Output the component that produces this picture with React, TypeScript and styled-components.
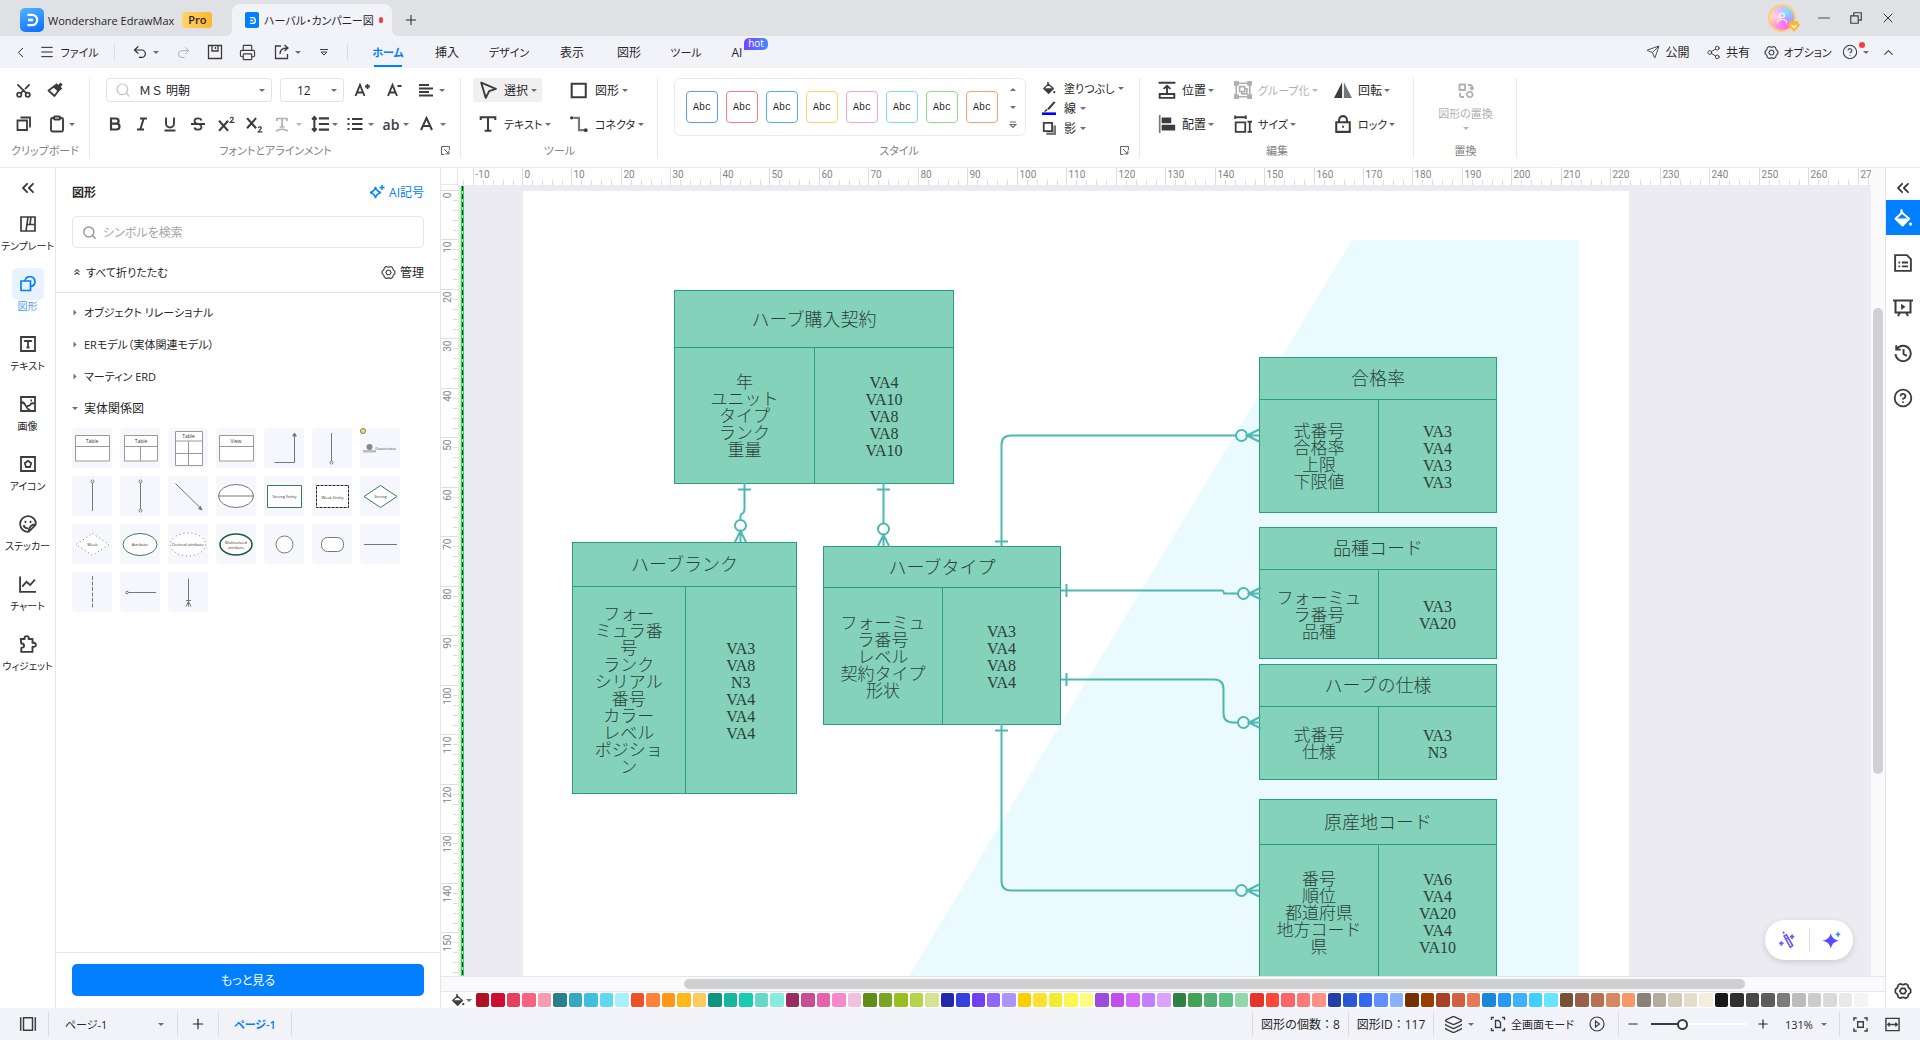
import React from 'react';
import styled, { createGlobalStyle, css } from 'styled-components';
import {
  ChevronLeft, ChevronUp, Menu, Undo2, Redo2, Printer, Plus, Minus, X, Send, Share2,
  Search, Scissors, Clipboard, ChevronsLeft, ChevronsUp, CircleHelp, Layers,
} from 'lucide-react';

const ink = '#3c3c3c';
const blue = '#0080ff';
const line = '#e6e6ea';
const teal = '#4db8b2';

const Global = createGlobalStyle`
  * { box-sizing: border-box; }
  html, body { margin: 0; height: 100%; }
  body, button, input, select {
    font-family: "Open Sans", "Noto Sans CJK JP", sans-serif;
    font-size: 12px;
    color: #262626;
    font-feature-settings: "palt";
  }
  button { background: none; border: 0; padding: 0; margin: 0; cursor: pointer; white-space: nowrap; }
  svg { display: block; flex: none; }
`;

const Shell = styled.div`
  height: 100vh;
  display: flex;
  flex-direction: column;
  overflow: hidden;
  background: #fff;
`;

/* ---------- shared bits ---------- */

const Caret = styled.i<{ $light?: boolean }>`
  flex: none;
  width: 0;
  height: 0;
  border: 3px solid transparent;
  border-top-color: ${p => (p.$light ? '#b8b8b8' : '#6e6e6e')};
  border-bottom: 0;
`;

const Spacer = styled.div`flex: 1;`;

const Gap = styled.div<{ $w: number }>`
  flex: none;
  width: ${p => p.$w}px;
`;

const Rule = styled.div<{ $h?: number }>`
  flex: none;
  width: 1px;
  height: ${p => p.$h ?? 16}px;
  background: #dcdde2;
`;

const Small = styled.span`font-size: 11px;`;

const Slot = styled.button<{ $w: number; $h?: number; $gap?: number }>`
  flex: none;
  width: ${p => p.$w}px;
  height: ${p => p.$h ?? 24}px;
  display: flex;
  align-items: center;
  justify-content: center;
  gap: ${p => p.$gap ?? 5}px;
  color: #262626;
`;

type IconProps = { s?: number; w?: number; box?: number; c?: string; children: React.ReactNode };
const Icon = ({ s = 16, w = 1.5, box = 16, c = ink, children }: IconProps) => (
  <svg width={s} height={s} viewBox={`0 0 ${box} ${box}`} fill="none" stroke={c} strokeWidth={w} aria-hidden="true">
    {children}
  </svg>
);

const G = ({ d, w = 1.8, c, s }: { d: string; w?: number; c?: string; s?: number }) => (
  <Icon w={w} c={c} s={s}><path d={d} /></Icon>
);

const Gear = ({ s = 16, w = 1.2 }: { s?: number; w?: number }) => (
  <Icon s={s} w={w}>
    <path d="M5.6 1.6 Q8 3 10.4 1.6 L12.4 2.8 Q12.4 5.4 14.8 6.6 V9.4 Q12.4 10.6 12.4 13.2 L10.4 14.4 Q8 13 5.6 14.4 L3.6 13.2 Q3.6 10.6 1.2 9.4 V6.6 Q3.6 5.4 3.6 2.8 Z" strokeLinejoin="round" />
    <path d="M6.6 5.6h2.8L10.8 8 9.4 10.4H6.6L5.2 8Z" strokeLinejoin="round" />
  </Icon>
);

const Bucket = ({ c = ink, s = 16 }: { c?: string; s?: number }) => (
  <Icon s={s} w={1.5} c={c}>
    <path d="M7 1 L6.5 3.2 L13 8.6 L7.6 14 L2 8.6 L8 3" strokeLinejoin="round" />
    <path d="M2 8.4 H13 L7.6 14 Z" fill={c} stroke="none" />
    <circle cx="14" cy="12.8" r="1.3" fill={c} stroke="none" />
  </Icon>
);

/* ---------- title bar ---------- */

const TitleBar = styled.header`
  flex: none;
  height: 36px;
  display: flex;
  align-items: center;
  padding: 0 16px 0 20px;
  background: #e0e1e5;
`;
const Brand = styled.div`
  align-self: flex-end;
  width: 212px;
  height: 32px;
  display: flex;
  align-items: center;
  gap: 4px;
  font-size: 11px;
  white-space: nowrap;
`;
const Logo = styled.span<{ $small?: boolean }>`
  flex: none;
  width: ${p => (p.$small ? 14 : 24)}px;
  height: ${p => (p.$small ? 16 : 24)}px;
  border-radius: ${p => (p.$small ? 2 : 5)}px;
  background: ${p => (p.$small ? blue : 'linear-gradient(160deg,#52b4ff,#0a6cff)')};
  display: grid;
  place-items: center;
`;
const Pro = styled.span`
  margin-left: 4px;
  width: 30px;
  height: 16px;
  line-height: 16px;
  border-radius: 3px;
  text-align: center;
  font-weight: 600;
  background: linear-gradient(90deg, #ffd56b, #ffb62e);
`;
const Tab = styled.div`
  align-self: flex-end;
  position: relative;
  width: 160px;
  height: 32px;
  padding: 0 9px 0 13px;
  display: flex;
  align-items: center;
  gap: 5px;
  border-radius: 8px 8px 0 0;
  background: #f2f3f9;
  white-space: nowrap;
  &::before, &::after {
    content: "";
    position: absolute;
    bottom: 0;
    width: 6px;
    height: 6px;
  }
  &::before { left: -6px; background: radial-gradient(circle at 0 0, transparent 6px, #f2f3f9 6px); }
  &::after { right: -6px; background: radial-gradient(circle at 100% 0, transparent 6px, #f2f3f9 6px); }
`;
const NewTab = styled(Slot)`align-self: flex-end;`;
const RedDot = styled.i`
  margin-left: auto;
  width: 6px;
  height: 6px;
  border-radius: 50%;
  background: #ff3b3b;
`;
const Avatar = styled.button`
  position: relative;
  width: 28px;
  height: 28px;
  margin-right: 12px;
  border: 2px solid #ffcf70;
  border-radius: 50%;
  display: grid;
  place-items: center;
  background: conic-gradient(from 40deg, #7ddfff, #b99cff, #ff6bf0, #ff9ae0, #ffd9c9, #e8b9ff, #7ddfff);
`;
const Gem = styled.span`
  position: absolute;
  right: -6px;
  bottom: -2px;
`;

const DMark = ({ s }: { s: number }) => (
  <svg width={s} height={s} viewBox="0 0 14 14" fill="none" stroke="#fff" strokeWidth="2">
    <path d="M3 2.5h4a4.5 4.5 0 0 1 0 9H3M3.5 7H8" />
  </svg>
);

const TitleArea = () => (
  <TitleBar>
    <Brand>
      <Logo><DMark s={16} /></Logo>
      <span>Wondershare EdrawMax</span>
      <Pro>Pro</Pro>
    </Brand>
    <Tab>
      <Logo $small><DMark s={9} /></Logo>
      <Small>ハーバル・カンパニー図</Small>
      <RedDot />
    </Tab>
    <NewTab $w={38} $h={32} aria-label="新しいタブ"><Plus size={16} strokeWidth={1.5} /></NewTab>
    <Spacer />
    <Avatar aria-label="アカウント">
      <Icon s={14} w={1.2} c="#fff"><circle cx="8" cy="5" r="2.8" /><path d="M3 14v-1.5a2.5 2.5 0 0 1 2.5-2.5h5a2.5 2.5 0 0 1 2.5 2.5V14" /></Icon>
      <Gem>
        <svg width="12" height="11" viewBox="0 0 12 11"><path d="M3 0h6l3 4-6 7-6-7Z" fill="#ffb52b" /><path d="M3.5 4 6 6.5 8.5 4" fill="none" stroke="#fff" strokeWidth="1.3" /></svg>
      </Gem>
    </Avatar>
    <Slot $w={32} aria-label="最小化"><Icon s={12} w={1.2}><path d="M0 8h16" /></Icon></Slot>
    <Slot $w={32} aria-label="元に戻す"><Icon s={14} w={1.3}><path d="M2 5.5h8.5V14H2zM5.5 5V2H14v8.5h-3" /></Icon></Slot>
    <Slot $w={32} aria-label="閉じる"><X size={16} strokeWidth={1.4} /></Slot>
  </TitleBar>
);

/* ---------- menu bar ---------- */

const MenuBar = styled.nav`
  flex: none;
  height: 32px;
  display: flex;
  align-items: center;
  padding: 0 16px 0 4px;
  background: #f2f3f9;
`;
const MenuTab = styled.button<{ $w: number; $on?: boolean; $kana?: boolean }>`
  position: relative;
  width: ${p => p.$w}px;
  height: 32px;
  color: ${p => (p.$on ? blue : '#262626')};
  font-size: ${p => (p.$kana ? 11 : 12)}px;
  ${p => p.$on && css`
    font-weight: 600;
    &::after {
      content: "";
      position: absolute;
      left: 16px;
      right: 16px;
      bottom: 1px;
      height: 2px;
      background: ${blue};
    }
  `}
`;
const Hot = styled.span`
  position: absolute;
  left: 28px;
  top: 2px;
  width: 24px;
  height: 12px;
  line-height: 11px;
  border-radius: 5px 5px 5px 0;
  background: linear-gradient(90deg, #7a45ff, #3f8bff);
  color: #fff;
  font-size: 10px;
`;
const HelpSlot = styled(Slot)`position: relative;`;
const HelpDot = styled.i`
  position: absolute;
  right: 7px;
  top: 2px;
  width: 6px;
  height: 6px;
  border-radius: 50%;
  background: #ff3b3b;
`;

const MenuArea = () => (
  <MenuBar>
    <Slot $w={32} aria-label="戻る"><ChevronLeft size={17} strokeWidth={1.4} /></Slot>
    <Slot $w={66}><Menu size={16} strokeWidth={1.5} /><Small>ファイル</Small></Slot>
    <Gap $w={12} /><Rule />
    <Slot $w={60} aria-label="元に戻す"><Undo2 size={16} strokeWidth={1.7} /><Caret /></Slot>
    <Slot $w={16} aria-label="やり直し"><Redo2 size={15} strokeWidth={1.5} color="#aaa" /></Slot>
    <Gap $w={8} />
    <Slot $w={32} aria-label="保存"><Icon w={1.3}><path d="M1.5 1.5h13v13h-13zM5 1.5v5.5h6V1.5M8.5 3v2" /></Icon></Slot>
    <Slot $w={32} aria-label="印刷"><Printer size={17} strokeWidth={1.6} color={ink} /></Slot>
    <Slot $w={48} aria-label="書き出し">
      <Icon w={1.3}><path d="M7 2H1.5v12.5h12V10M6 10q0-6 7-6M10.5 1 14 4l-3.5 3" /></Icon><Caret />
    </Slot>
    <Slot $w={26} aria-label="その他"><Icon s={8} box={8} w={1}><path d="M0 1.5h8M1 4h6L4 7Z" /></Icon></Slot>
    <Gap $w={10} /><Rule />
    <Gap $w={10} />
    <MenuTab $w={60} $on $kana>ホーム</MenuTab>
    <MenuTab $w={58}>挿入</MenuTab>
    <MenuTab $w={66} $kana>デザイン</MenuTab>
    <MenuTab $w={60}>表示</MenuTab>
    <MenuTab $w={54}>図形</MenuTab>
    <MenuTab $w={60} $kana>ツール</MenuTab>
    <MenuTab $w={42}>AI<Hot>hot</Hot></MenuTab>
    <Spacer />
    <Slot $w={60}><Send size={14} strokeWidth={1.5} color={ink} />公開</Slot>
    <Slot $w={60}><Share2 size={15} strokeWidth={1.5} color={ink} />共有</Slot>
    <Gap $w={4} />
    <Slot $w={72} $gap={4}><Gear s={15} /><Small>オプション</Small></Slot>
    <Gap $w={4} />
    <HelpSlot $w={34} aria-label="ヘルプ"><CircleHelp size={16} strokeWidth={1.6} color={ink} /><Caret /><HelpDot /></HelpSlot>
    <Slot $w={32} aria-label="リボンを隠す"><ChevronUp size={15} strokeWidth={1.7} color={ink} /></Slot>
  </MenuBar>
);

/* ---------- ribbon ---------- */

const Ribbon = styled.div`
  flex: none;
  height: 100px;
  display: flex;
  align-items: stretch;
  border-bottom: 1px solid #ebebee;
  background: #fff;
`;
const Group = styled.section<{ $w: number }>`
  flex: none;
  position: relative;
  width: ${p => p.$w}px;
  padding: 10px 12px 0;
  display: flex;
  flex-direction: column;
  gap: 10px;
  &::after {
    content: "";
    position: absolute;
    right: 0;
    top: 10px;
    height: 80px;
    width: 1px;
    background: #ebebee;
  }
`;
const GroupName = styled.footer`
  display: flex;
  justify-content: center;
  align-items: center;
  height: 8px;
  font-size: 11px;
  color: #828282;
  white-space: nowrap;
`;
const Corner = styled.button`
  position: absolute;
  right: 11px;
  bottom: 12px;
`;
const Row = styled.div<{ $pad?: number }>`
  height: 24px;
  display: flex;
  align-items: center;
  padding-left: ${p => p.$pad ?? 0}px;
`;
const Tool = styled.button<{ $w: number; $on?: boolean; $off?: boolean; $gap?: number }>`
  flex: none;
  width: ${p => p.$w}px;
  height: 24px;
  padding-left: 6px;
  display: flex;
  align-items: center;
  gap: ${p => p.$gap ?? 3}px;
  border-radius: 3px;
  background: ${p => (p.$on ? '#f0f0f0' : 'transparent')};
  color: ${p => (p.$off ? '#b0b0b0' : '#262626')};
  svg { margin-right: 4px; }
`;
const Field = styled.label<{ $w: number }>`
  flex: none;
  width: ${p => p.$w}px;
  height: 24px;
  display: flex;
  align-items: center;
  gap: 8px;
  padding: 0 6px 0 8px;
  border: 1px solid #e2e2e6;
  border-radius: 4px;
  select {
    flex: 1;
    min-width: 0;
    appearance: none;
    border: 0;
    background: none;
    padding: 0;
    outline: 0;
    font-feature-settings: normal;
  }
`;
const StyleBox = styled.div`
  flex: none;
  width: 352px;
  height: 58px;
  display: flex;
  align-items: center;
  gap: 8px;
  padding: 0 5px 0 11px;
  border: 1px solid #ebebee;
  border-radius: 6px;
`;
const StyleTile = styled.button<{ $c: string }>`
  width: 32px;
  height: 32px;
  border: 1px solid ${p => p.$c};
  border-radius: 4px;
  font-family: "Liberation Mono", monospace;
  font-size: 10px;
`;
const Steps = styled.div`
  margin-left: auto;
  height: 48px;
  display: flex;
  flex-direction: column;
  justify-content: space-between;
  align-items: center;
  button { height: 12px; width: 14px; display: grid; place-items: center; }
`;
const StyleArea = styled.div`
  height: 58px;
  display: flex;
  gap: 10px;
  padding-left: 4px;
`;
const StyleCol = styled.div`
  display: flex;
  flex-direction: column;
  button { height: 20px; }
`;
const Replace = styled.button`
  height: 58px;
  display: flex;
  flex-direction: column;
  align-items: center;
  gap: 6px;
  padding-top: 5px;
  color: #b0b0b0;
  font-size: 11px;
`;
const UpCaret = styled(Caret)`transform: rotate(180deg);`;
const AbGlyph = styled.span`
  font-size: 14px;
  font-weight: 600;
  color: ${ink};
`;

const tileColors = ['#5b9bff', '#ff7a82', '#4fb0f5', '#ffd368', '#f5a3e0', '#80dcf2', '#90dd84', '#ff9f70'];

const CornerIcon = () => (
  <Corner aria-label="詳細設定">
    <Icon s={9} w={1.5}><path d="M6 15H1V1h14v6M5.5 5.5l8 8M14 8v6H8" /></Icon>
  </Corner>
);

const RibbonArea = () => (
  <Ribbon>
    <Group $w={90}>
      <Row>
        <Slot $w={23} aria-label="切り取り"><Scissors size={17} strokeWidth={2.5} color={ink} transform="rotate(-90)" /></Slot>
        <Gap $w={8} />
        <Slot $w={24} aria-label="書式のコピー">
          <Icon w={1.8}><path d="M1.5 8.5 7 4.5l4.5 4L7.5 14Z" strokeLinejoin="round" /><path d="M7 4.5 11.5 8.5 14 6.5 9.5 2.5Z" fill={ink} /><path d="M12 4.5 14.5 1.5" strokeWidth="3" /></Icon>
        </Slot>
      </Row>
      <Row>
        <Slot $w={23} aria-label="コピー"><G d="M1.5 4.5h9.5v9.5H1.5zM4.5 1.5h9.5v10" /></Slot>
        <Gap $w={8} />
        <Slot $w={36} $gap={3} aria-label="貼り付け"><Clipboard size={18} strokeWidth={2.5} color={ink} /><Caret /></Slot>
      </Row>
      <GroupName>クリップボード</GroupName>
    </Group>

    <Group $w={371}>
      <Row $pad={4}>
        <Field $w={166}>
          <Search size={16} strokeWidth={1.8} color="#c0c0c0" />
          <select aria-label="フォント"><option>ＭＳ 明朝</option></select>
          <Caret />
        </Field>
        <Gap $w={8} />
        <Field $w={64}>
          <Gap $w={0} />
          <select aria-label="サイズ"><option>12</option></select>
          <Caret />
        </Field>
        <Gap $w={3} />
        <Slot $w={30} aria-label="大きく"><G w={1.9} d="M1.5 14 6 3l4.5 11M3 10.5h6M11 4.5h5M13.5 2v5" /></Slot>
        <Slot $w={34} aria-label="小さく"><G w={1.9} d="M2 14 6.5 3 11 14M3.5 10.5h6M11.5 4h4" /></Slot>
        <Slot $w={40} aria-label="配置"><G w={2} d="M1 3h10M1 6.5h14M1 10h10M1 13.5h14" /><Caret /></Slot>
      </Row>
      <Row>
        <Slot $w={26} aria-label="太字"><G w={2.2} d="M4 2.5h5a2.6 2.6 0 0 1 0 5.2H4zM4 7.7h5.6a2.9 2.9 0 0 1 0 5.8H4z" /></Slot>
        <Slot $w={28} aria-label="斜体"><G w={2} d="M6 2.5h7M3 13.5h7M9.7 2.5 6.3 13.5" /></Slot>
        <Slot $w={28} aria-label="下線"><G w={1.9} d="M4 1.5v6a4 4 0 0 0 8 0v-6M2.5 14.5h11" /></Slot>
        <Slot $w={28} aria-label="取り消し線"><G d="M11.5 4.5C11 1.5 4.5 1.5 4.5 5q0 2 3 2.8M1 8h14M4.5 11.5c.5 3 7 3 7-.5q0-1.5-2-2.5" /></Slot>
        <Slot $w={28} aria-label="上付き"><Icon s={17} w={2}><path d="M1 4.5 9.5 14M9.5 4.5 1 14" /><path d="M11.5 2.5q.3-1.5 1.700-1.300 1.800.3.800 2L11.500 6h4" strokeWidth="1.1" /></Icon></Slot>
        <Slot $w={28} aria-label="下付き"><Icon s={17} w={2}><path d="M1 2 9.5 11.5M9.5 2 1 11.5" /><path d="M11.5 11.5q.3-1.5 1.700-1.300 1.800.3.800 2L11.500 15h4" strokeWidth="1.1" /></Icon></Slot>
        <Gap $w={2} />
        <Slot $w={36} aria-label="文字効果"><G c="#b0b0b0" w={1.7} d="M2 2.5h10M2 2v3M12 2v3M7 2.5v9M4.5 11h5M1 15q6-3.5 12 0" /><Caret $light /></Slot>
        <Slot $w={36} $gap={3} aria-label="行間"><Icon s={18} w={1.8}><path d="M3 2v12M1 4l2-2.2L5 4M1 12l2 2.2L5 12M7 3h9M7 8h9M7 13h9" /></Icon><Caret /></Slot>
        <Slot $w={36} aria-label="箇条書き"><G w={1.9} d="M5 3h10.5M5 8h10.5M5 13h10.5M.5 3h2M.5 8h2M.5 13h2" /><Caret /></Slot>
        <Slot $w={36} $gap={4} aria-label="大文字小文字"><AbGlyph>ab</AbGlyph><Caret /></Slot>
        <Slot $w={36} aria-label="文字色"><G w={2} d="M2 14 7.5 2 13 14M4 10h7" /><Caret /></Slot>
      </Row>
      <GroupName>フォントとアラインメント</GroupName>
      <CornerIcon />
    </Group>

    <Group $w={197}>
      <Row>
        <Tool $w={69} $on>
          <Icon s={18} w={1.7}><path d="M2 1.5 15 7 9 9 6 15Z" strokeLinejoin="round" /></Icon>選択<Caret />
        </Tool>
        <Gap $w={22} />
        <Tool $w={80}><G s={18} w={1.8} d="M1.5 2.5h12.5v12h-12.5z" />図形<Caret /></Tool>
      </Row>
      <Row>
        <Tool $w={84}><G s={18} w={1.8} d="M1.5 4.5V2h13v2.5M8 2v12.5M5 14h6" /><Small>テキスト</Small><Caret /></Tool>
        <Gap $w={7} />
        <Tool $w={84}>
          <Icon s={18} w={1.9} c="#777"><path d="M3 2.5h5v11h5" /><circle cx="1.5" cy="2.5" r="1.5" fill={ink} stroke="none" /><circle cx="14" cy="13.5" r="1.7" fill={ink} stroke="none" /></Icon>
          <Small>コネクタ</Small><Caret />
        </Tool>
      </Row>
      <GroupName>ツール</GroupName>
    </Group>

    <Group $w={482}>
      <StyleArea>
        <StyleBox>
          {tileColors.map(c => <StyleTile key={c} $c={c}>Abc</StyleTile>)}
          <Steps>
            <button aria-label="上へ"><UpCaret /></button>
            <button aria-label="下へ"><Caret /></button>
            <button aria-label="一覧"><Icon s={8} box={8} w={1.2} c="#6e6e6e"><path d="M1 1h6M1 3.5h6L4 6.5Z" /></Icon></button>
          </Steps>
        </StyleBox>
        <StyleCol>
          <Tool $w={84} $gap={4}><Bucket s={14} /><Small>塗りつぶし</Small><Caret /></Tool>
          <Tool $w={60} $gap={4}>
            <Icon s={14} box={16} w={1.8}><path d="M14.5 1 7 9.5" strokeWidth="2.4" /><path d="M6 9.5 3 12" /><path d="M0 14.5h16" stroke="#00f" strokeWidth="3" /></Icon>線<Caret />
          </Tool>
          <Tool $w={60} $gap={4}>
            <Icon s={14} w={2}><path d="M5 14.5h9.5V5" stroke="#777" strokeWidth="3" /><path d="M2 2h9.5v9.5H2z" fill="#fff" /></Icon>影<Caret />
          </Tool>
        </StyleCol>
      </StyleArea>
      <GroupName>スタイル</GroupName>
      <CornerIcon />
    </Group>

    <Group $w={274}>
      <Row>
        <Tool $w={76} $gap={2}><G s={18} w={1.7} d="M.5 1.5h15M8 11V4.5M5 7l3-2.8L11 7M1.5 11.5h13v3.500h-13z" />位置<Caret /></Tool>
        <Tool $w={100} $off $gap={2}><G s={18} c="#b0b0b0" w={1.5} d="M2 2h12v12H2zM.5 .5h3v3h-3zM12.5 .5h3v3h-3zM.5 12.5h3v3h-3zM12.5 12.5h3v3h-3zM5 5h4.5v4.5H5zM10 7h1.500v4.500H7V10" /><Small>グループ化</Small><Caret $light /></Tool>
        <Tool $w={70} $gap={2}>
          <Icon s={18}><path d="M7.2 1v14H0Z" fill={ink} stroke="none" /><path d="M8.8 1v14H16Z" fill="#777" stroke="none" /></Icon>回転<Caret />
        </Tool>
      </Row>
      <Row>
        <Tool $w={76} $gap={2}><Icon s={18}><path d="M1.5 0v16" stroke="#777" /><path d="M4 3h7v3.5H4zM4 9.5h10.5V13H4z" fill={ink} /></Icon>配置<Caret /></Tool>
        <Tool $w={100} $gap={2}><G s={18} w={1.6} d="M1.5 6.5h8.5V15H1.5zM1 2h9.5M1 .5v3M10.5 .5v3M12 6h4M12 15h4M14 6v9" /><Small>サイズ</Small><Caret /></Tool>
        <Tool $w={70} $gap={2}><G s={18} w={1.8} d="M2 6.5h12v8.500H2zM4.5 6V4.5a3.5 3.5 0 0 1 7 0V6M7.2 10.5h1.6" /><Small>ロック</Small><Caret /></Tool>
      </Row>
      <GroupName>編集</GroupName>
    </Group>

    <Group $w={103}>
      <Replace>
        <G c="#b0b0b0" w={1.8} d="M1.5 1.5h5.5V7H1.5zM9 11.5a2.8 2.8 0 1 0 5.6 0a2.8 2.8 0 1 0-5.6 0M10 2h2.5q1.5 0 1.5 1.5V6M12 4.5l2 2 2-2M2 10v2.5q0 1.5 1.5 1.5H6" />
        <span>図形の置換</span>
        <Caret $light />
      </Replace>
      <GroupName>置換</GroupName>
    </Group>
  </Ribbon>
);

/* ---------- left rail ---------- */

const Body = styled.main`
  flex: 1;
  min-height: 0;
  display: flex;
`;
const Rail = styled.nav`
  flex: none;
  width: 56px;
  display: flex;
  flex-direction: column;
  align-items: center;
  border-right: 1px solid ${line};
`;
const RailTop = styled.button`
  height: 40px;
  display: grid;
  place-items: center;
`;
const RailItem = styled.button<{ $on?: boolean }>`
  height: 60px;
  width: 55px;
  display: flex;
  flex-direction: column;
  align-items: center;
  color: ${p => (p.$on ? '#4c9fff' : '#262626')};
  font-size: 10px;
  line-height: 12px;
  span {
    width: 32px;
    height: 32px;
    border-radius: 5px;
    display: grid;
    place-items: center;
    background: ${p => (p.$on ? '#e8f3ff' : 'transparent')};
  }
`;

const railItems: { name: string; on?: boolean; icon: React.ReactNode }[] = [
  { name: 'テンプレート', icon: <G w={1.7} d="M1 1h14v14H1zM8 1 6 15M7.5 8.5H15M10 8.5 11 1" /> },
  { name: '図形', on: true, icon: <G c={blue} w={1.7} d="M1 5h9.5v9.5H1zM5 4.5a5 5 0 1 1 6 6" /> },
  { name: 'テキスト', icon: <G w={1.8} d="M1 1h14v14H1zM5 6V5h6v1M8 5v6.5M6.5 11.5h3" /> },
  { name: '画像', icon: <G w={1.8} d="M1 1h14v14H1zM1 6q3 0 4.5 3.5T11 15M7 10q3 0 3.5-1.5T15 7M10.5 4.5h1.5" /> },
  { name: 'アイコン', icon: <G w={1.8} d="M1 1h14v14H1zM8 4.8l3.2 2.4L10 11H6L4.8 7.2Z" /> },
  { name: 'ステッカー', icon: <Icon s={18} w={1.6}><path d="M15 8.5A7 7 0 1 0 8.5 15M15 8.5 8.5 15M15 8.5q-6-.5-6.5 6.5M4 9q1 3 4 2.8" /><path d="M5 6h1.5M9.5 6H11" strokeWidth="2" /></Icon> },
  { name: 'チャート', icon: <Icon s={17} w={1.7}><path d="M1 .5V15h15M3 10l4-4.5 3.5 3L15 3.5" /></Icon> },
  { name: 'ウィジェット', icon: <Icon s={18} w={1.7}><path d="M1.5 3.5H5q-.5-2.5 1.8-2.5T8.500 3.500H12V7q3-.5 3 1.7t-3 1.8V15H2v-3.500q2.500 0 2.500-2T2 7.500Z" strokeLinejoin="round" /></Icon> },
];

/* ---------- symbol panel ---------- */

const Panel = styled.aside`
  flex: none;
  width: 385px;
  display: flex;
  flex-direction: column;
  border-right: 1px solid ${line};
`;
const PanelHead = styled.div`
  height: 48px;
  padding: 0 16px;
  display: flex;
  align-items: center;
  justify-content: space-between;
`;
const PanelTitle = styled.h2`
  margin: 0;
  font-size: 12px;
  font-weight: 600;
`;
const AiLink = styled.button`
  display: flex;
  align-items: center;
  gap: 4px;
  color: ${blue};
`;
const SearchBox = styled.label`
  height: 32px;
  margin: 0 16px;
  padding: 0 9px;
  display: flex;
  align-items: center;
  gap: 6px;
  border: 1px solid ${line};
  border-radius: 5px;
  input {
    flex: 1;
    border: 0;
    outline: 0;
    padding: 0;
    &::placeholder { color: #a6a6a6; }
  }
`;
const ToolsRow = styled.div`
  height: 45px;
  padding: 4px 16px 0;
  display: flex;
  align-items: center;
  justify-content: space-between;
  border-bottom: 1px solid ${line};
  button { display: flex; align-items: center; gap: 4px; }
`;
const Libraries = styled.div`
  flex: 1;
  display: flex;
  flex-direction: column;
  padding-top: 3px;
`;
const Library = styled.button<{ $open?: boolean }>`
  height: 32px;
  padding: 0 16px;
  display: flex;
  align-items: center;
  gap: 6px;
  i { transform: ${p => (p.$open ? 'none' : 'rotate(-90deg)')}; }
`;
const Tiles = styled.div`
  padding: 4px 16px;
  display: grid;
  grid-template-columns: repeat(7, 40px);
  gap: 8px;
`;
const Tile = styled.button`
  height: 40px;
  border-radius: 4px;
  background: #f6f7fc;
  text { fill: #333; stroke: none; text-anchor: middle; }
`;
const PanelFoot = styled.div`
  height: 56px;
  padding: 11px 16px 12px;
  border-top: 1px solid ${line};
`;
const More = styled.button`
  width: 100%;
  height: 32px;
  border-radius: 5px;
  background: ${blue};
  color: #fff;
`;

const grn = '#3c7a5c';
const shapes: React.ReactNode[] = [
  <><path d="M3.5 7.5h34V33h-34zM3.5 18.5h34" fill="#fff" stroke="#999" /><text x="20" y="15">Table</text></>,
  <><path d="M4.5 7.5h33V33h-33zM4.5 18.5h33M20.5 18.5V33" fill="#fff" stroke="#999" /><text x="21" y="15">Table</text></>,
  <><path d="M7.5 3.5h27v34h-27zM7.5 13h27M7.5 25.5h27M20.5 13v24.5" fill="#fff" stroke="#999" /><text x="20.5" y="10">Table</text></>,
  <><path d="M3.5 7.5h34V33h-34zM3.5 18.5h34" fill="#fff" stroke="#999" /><text x="20" y="15">View</text></>,
  <><path d="M10.5 34.5h20V6" /><path d="m30.5 5 1.8 3h-3.6Z" fill="#777" /></>,
  <><path d="M19.5 5v28" /><circle cx="19.5" cy="34.5" r="1.5" /></>,
  <><circle cx="3" cy="3" r="2.5" fill="#ffe14d" stroke="#777" /><circle cx="9.5" cy="19" r="3" fill="#888" stroke="none" /><path d="M3 22h13v2.5H3z" fill="#bbb" stroke="none" /><text x="25.5" y="21.5" fontSize="3">Characteristics</text></>,
  <><path d="M20.5 7v28" /><circle cx="20.5" cy="5.5" r="1.5" /></>,
  <><path d="M20.5 7v26" /><circle cx="20.5" cy="5.5" r="1.5" /><circle cx="20.5" cy="34.5" r="1.5" /></>,
  <><path d="M7.5 7.5 32.5 32" /><path d="m34 34-3.5-1.5 2-2Z" fill="#777" /></>,
  <><ellipse cx="20" cy="20" rx="17.5" ry="11.5" fill="#fff" /><path d="M2.5 20h35" /></>,
  <><path d="M3.5 9.5h34v22h-34z" stroke={grn} fill="#fff" /><text x="20.5" y="22" fontSize="4">Strong Entity</text></>,
  <><path d="M4.5 9.5h32v22h-32z" stroke="#222" strokeDasharray="3 1" fill="#fff" /><text x="20.5" y="22.5" fontSize="4">Weak Entity</text></>,
  <><path d="M20.5 9.5 37 20.5 20.5 31.5 4 20.5Z" stroke={grn} fill="#fff" /><text x="20.5" y="22" fontSize="4">Strong</text></>,
  <><path d="M20.5 9.5 37 20.5 20.5 31.5 4 20.5Z" strokeDasharray="1 3" fill="#fff" /><text x="20.5" y="22" fontSize="4">Weak</text></>,
  <><ellipse cx="20" cy="20.5" rx="17" ry="11" stroke={grn} fill="#fff" /><text x="20" y="22" fontSize="4">Attribute</text></>,
  <><ellipse cx="20" cy="20.5" rx="17.5" ry="11.5" strokeDasharray="1 3" fill="#fff" /><text x="20" y="22" fontSize="4">Derived attribute</text></>,
  <><ellipse cx="20" cy="20.5" rx="16" ry="10.5" stroke="#22583c" strokeWidth="1.6" fill="#fff" /><text x="20" y="20" fontSize="4">Multivalued</text><text x="20" y="25" fontSize="4">attribute</text></>,
  <circle cx="20.5" cy="20.5" r="8.5" fill="#fff" />,
  <rect x="9.5" y="13.5" width="22" height="14" rx="6" fill="#fff" />,
  <path d="M4 20.5h33" />,
  <path d="M20.5 4v33" strokeDasharray="4 1.5" />,
  <><path d="M8 20.5h28" /><circle cx="7" cy="20.5" r="1.3" /></>,
  <><path d="M20.5 6.5v28M18 28.5h5M18 34.5l2.5-5 2.5 5" /></>,
];

const Sparkle = () => (
  <Icon s={16} w={1.4} c={blue}><path d="M6.5 3q1 4.5 5.5 5.5-4.5 1-5.5 5.5Q5.5 9.5 1 8.5 5.500 7.500 6.500 3ZM13 1v5M10.500 3.500h5" /></Icon>
);

const SymbolPanel = () => (
  <Panel>
    <PanelHead>
      <PanelTitle>図形</PanelTitle>
      <AiLink><Sparkle />AI記号</AiLink>
    </PanelHead>
    <SearchBox>
      <Search size={15} strokeWidth={2.4} color="#9c9c9c" />
      <input placeholder="シンボルを検索" aria-label="シンボルを検索" />
    </SearchBox>
    <ToolsRow>
      <button><ChevronsUp size={10} strokeWidth={2.6} color="#555" /><Small>すべて折りたたむ</Small></button>
      <button><Gear s={15} />管理</button>
    </ToolsRow>
    <Libraries>
      <Library><Caret /><Small>オブジェクト リレーショナル</Small></Library>
      <Library><Caret /><Small>ERモデル（実体関連モデル）</Small></Library>
      <Library><Caret /><Small>マーティン ERD</Small></Library>
      <Library $open><Caret />実体関係図</Library>
      <Tiles>
        {shapes.map((shape, i) => (
          <Tile key={i} aria-label={`シンボル ${i + 1}`}>
            <svg width="40" height="40" viewBox="0 0 40 40" fill="none" stroke="#777" strokeWidth="1" fontSize="5">{shape}</svg>
          </Tile>
        ))}
      </Tiles>
    </Libraries>
    <PanelFoot><More>もっと見る</More></PanelFoot>
  </Panel>
);

/* ---------- work area ---------- */

const Work = styled.div`
  flex: 1;
  min-width: 0;
  display: flex;
  flex-direction: column;
`;
const Stage = styled.div`
  flex: 1;
  min-height: 0;
  display: grid;
  grid-template-columns: 17px minmax(0, 1fr) 14px;
  grid-template-rows: 17px minmax(0, 1fr);
  grid-template-areas: "corner top scroll" "left canvas scroll";
`;
const RulerCorner = styled.div`
  grid-area: corner;
  border-right: 1px solid ${line};
  border-bottom: 1px solid ${line};
`;
const Ruler = styled.div<{ $area: string }>`
  grid-area: ${p => p.$area};
  overflow: hidden;
  svg { width: 100%; height: 100%; }
  text { font: 10px Roboto, sans-serif; fill: #858585; }
  path { stroke: #dcdce2; fill: none; }
`;
const Canvas = styled.div`
  grid-area: canvas;
  position: relative;
  overflow: hidden;
  background: #ebebf1;
`;
const Guide = styled.div`
  position: absolute;
  left: 3px;
  top: 1px;
  bottom: 0;
  width: 3px;
  border: solid #00f000;
  border-width: 0 1px;
  background: repeating-linear-gradient(#0010c0 0 5px, #fff 5px 8px);
`;
const Page = styled.div`
  position: absolute;
  left: 65px;
  top: 6px;
  width: 1106px;
  height: 785px;
  background: #fff;
`;
const Layer = styled.svg`
  position: absolute;
  left: 0;
  top: 0;
`;
const Entity = styled.article<{ $x: number; $y: number; $w: number; $h: number; $head: number }>`
  position: absolute;
  left: ${p => p.$x}px;
  top: ${p => p.$y}px;
  width: ${p => p.$w}px;
  height: ${p => p.$h}px;
  display: grid;
  grid-template: ${p => p.$head}px minmax(0, 1fr) / 1fr 1fr;
  border: 1px solid #26a17f;
  background: #83d2b9;
  color: #2c403a;
  font-family: "Liberation Serif", "Noto Sans CJK JP", serif;
  font-feature-settings: normal;
  font-weight: 300;
  line-height: 17px;
  text-align: center;
  white-space: pre-line;
`;
const EntityName = styled.h3`
  grid-column: 1 / 3;
  margin: 0;
  padding-top: 2px;
  display: grid;
  place-content: center;
  border-bottom: 1px solid #26a17f;
  font: inherit;
  font-size: 18px;
`;
const EntityCell = styled.div<{ $types?: boolean }>`
  display: grid;
  place-content: center;
  padding-top: 2px;
  font-size: ${p => (p.$types ? 16 : 17)}px;
  border-left: ${p => (p.$types ? '1px solid #26a17f' : '0')};
`;

type E = { x: number; y: number; w: number; h: number; head: number; name: string; left: string; right: string };
const entities: E[] = [
  { x: 151, y: 99, w: 280, h: 194, head: 57, name: 'ハーブ購入契約', left: '年\nユニット\nタイプ\nランク\n重量', right: 'VA4\nVA10\nVA8\nVA8\nVA10' },
  { x: 49, y: 351, w: 225, h: 252, head: 44, name: 'ハーブランク', left: 'フォー\nミュラ番\n号\nランク\nシリアル\n番号\nカラー\nレベル\nポジショ\nン', right: 'VA3\nVA8\nN3\nVA4\nVA4\nVA4' },
  { x: 300, y: 355, w: 238, h: 179, head: 41, name: 'ハーブタイプ', left: 'フォーミュ\nラ番号\nレベル\n契約タイプ\n形状', right: 'VA3\nVA4\nVA8\nVA4' },
  { x: 736, y: 166, w: 238, h: 156, head: 42, name: '合格率', left: '式番号\n合格率\n上限\n下限値', right: 'VA3\nVA4\nVA3\nVA3' },
  { x: 736, y: 336, w: 238, h: 132, head: 42, name: '品種コード', left: 'フォーミュ\nラ番号\n品種', right: 'VA3\nVA20' },
  { x: 736, y: 473, w: 238, h: 116, head: 42, name: 'ハーブの仕様', left: '式番号\n仕様', right: 'VA3\nN3' },
  { x: 736, y: 608, w: 238, h: 181, head: 45, name: '原産地コード', left: '番号\n順位\n都道府県\n地方コード\n県', right: 'VA6\nVA4\nVA20\nVA4\nVA10' },
];

const UNIT = 49.47;

const TopRuler = () => {
  const majors = Array.from({ length: 30 }, (_, i) => i - 2);
  return (
    <Ruler $area="top">
      <svg aria-hidden="true">
        {majors.map(m => {
          const x = Math.round(65 + m * UNIT) - 0.5;
          return (
            <g key={m}>
              <path d={`M${x} 0V17${[1, 2, 3, 4].map(k => `M${Math.round(x + k * 9.9) + 0.5} 12v5`).join('')}`} />
              {m > -2 && <text x={x + 2} y="10">{m * 10}</text>}
            </g>
          );
        })}
      </svg>
    </Ruler>
  );
};

const LeftRuler = () => {
  const majors = Array.from({ length: 16 }, (_, i) => i);
  return (
    <Ruler $area="left">
      <svg aria-hidden="true">
        {majors.map(m => {
          const y = Math.round(5 + m * UNIT) + 0.5;
          return (
            <g key={m}>
              <path d={`M0 ${y}H17${[1, 2, 3, 4].map(k => `M12 ${Math.round(y + k * 9.9) + 0.5}h5`).join('')}`} />
              <text x="0" y="0" textAnchor="end" transform={`translate(10 ${y + 2}) rotate(-90)`}>{m * 10}</text>
            </g>
          );
        })}
      </svg>
    </Ruler>
  );
};

const Connectors = () => (
  <Layer width="1106" height="785" fill="none" stroke={teal} strokeWidth="2">
    <path d="M221.5 292v26q0 4-3 5-1.5 1-1 5M215 298.5h13" />
    <circle cx="217.5" cy="334.5" r="5.5" />
    <path d="M217.5 340v11M212 351l5.5-11 5.5 11" />
    <path d="M360.5 292v40M354 298.5h13" />
    <circle cx="360.5" cy="338" r="5.5" />
    <path d="M360.5 343v12M355 355l5.5-11 5.5 11" />
    <path d="M478.5 355V254q0-9.5 9.5-9.5H713M472 350.5h13" />
    <circle cx="718.5" cy="244.5" r="5.5" />
    <path d="M724 244.5h12M736 238.5l-12 6 12 6" />
    <path d="M538 399.5H699q1.5 0 2 3h14M543.5 393v13" />
    <circle cx="720.5" cy="402.5" r="5.5" />
    <path d="M726 402.5h11M738 396.5l-12 6 12 6" />
    <path d="M538 488.5H691q9.5 0 9.5 9.5V522q0 9.5 9.5 9.5h5M543.5 482v13" />
    <circle cx="720.5" cy="531.5" r="5.5" />
    <path d="M726 531.5h11M738 525.5l-12 6 12 6" />
    <path d="M478.5 533V690q0 9.5 9.5 9.5H713M472 539.5h13" />
    <circle cx="718.5" cy="699.5" r="5.5" />
    <path d="M724 699.5h12M736 693.5l-12 6 12 6" />
  </Layer>
);

const FloatBar = styled.div`
  position: absolute;
  right: 18px;
  bottom: 16px;
  width: 88px;
  height: 40px;
  display: flex;
  align-items: center;
  justify-content: center;
  gap: 4px;
  border-radius: 20px;
  background: #fff;
  box-shadow: 0 2px 6px rgba(0, 0, 0, .14);
`;

const VScroll = styled.div`
  grid-area: scroll;
  display: grid;
  grid-template-rows: 140fr 466fr 202fr;
  justify-items: center;
  background: #fafafa;
`;
const HScroll = styled.div`
  flex: none;
  height: 16px;
  display: grid;
  grid-template-columns: 243fr 1062fr 140fr;
  align-items: center;
  border-top: 1px solid ${line};
  border-bottom: 1px solid ${line};
  background: #fafafa;
`;
const Thumb = styled.div<{ $v?: boolean }>`
  ${p => (p.$v ? 'grid-row: 2; width: 10px;' : 'grid-column: 2; height: 10px;')}
  border-radius: 5px;
  background: #cfd0d2;
`;
const ColorBar = styled.div`
  flex: none;
  height: 16px;
  display: flex;
  align-items: center;
  padding-right: 15px;
`;
const FillPick = styled.button`
  width: 35px;
  display: flex;
  align-items: center;
  justify-content: flex-end;
  gap: 1px;
  padding-right: 4px;
`;
const Swatch = styled.button<{ $c: string }>`
  flex: 1;
  height: 14px;
  margin-right: 2px;
  border-radius: 2px;
  background: ${p => p.$c};
`;
const palette = (
  'b01020 d00c30 e8405c f86480 f89cb0 28808c 38a8c0 40c0dc 60d8f0 a8f0ff f05028 ff8038 ff9818 ffb818 ffc860 ' +
  '109480 18b49c 18ccb0 68d8c8 88ecdc 982c60 c84c90 e464ac f888cc f0c0dc 608c18 78a428 98c020 b4d44c d4e490 ' +
  '2028b0 3640dc 7040f4 9068f8 ac94fa ffcc00 ffe030 f0ec30 f8f850 fcfc84 9c4cdc c44ce8 d468f8 c080ff dca0ff ' +
  '308044 40a054 50b074 60c084 90d8a8 e83428 ff4838 ff6468 ff7878 ff9088 2440a8 2c58d4 3468f4 6090ff 88b0fc ' +
  '743000 983c00 a84028 d06040 e87858 1888dc 2898f8 40b0ff 40d0ff 68e4ff 785038 986048 b87050 d88860 f89868 ' +
  '8c8078 b4ac9c d0ccb8 e4dccc f4ecdc 181818 303030 484848 5c5c5c 7c7c7c bcbcbc cccccc dadada e8e8e8 f4f4f4'
).split(' ');

const WorkArea = () => (
  <Work>
    <Stage>
      <RulerCorner />
      <TopRuler />
      <LeftRuler />
      <Canvas>
        <Page>
          <Layer width="1106" height="785"><path d="M829 49h227v736H386Z" fill="#eafaff" /></Layer>
          {entities.map(e => (
            <Entity key={e.name} $x={e.x} $y={e.y} $w={e.w} $h={e.h} $head={e.head}>
              <EntityName>{e.name}</EntityName>
              <EntityCell>{e.left}</EntityCell>
              <EntityCell $types>{e.right}</EntityCell>
            </Entity>
          ))}
          <Connectors />
        </Page>
        <Guide />
        <FloatBar>
          <Slot $w={36} aria-label="AI 編集">
            <Icon s={18} w={1.5} c="#7058f0"><path d="M5.5 4.5 7.5 3.5 13 13l-2 1.5ZM6.5 7.5l2-1M12.5 3v4M10.5 5h4M3 9v4M1 11h4M5 .5v2M8 2" /></Icon>
          </Slot>
          <Rule $h={24} />
          <Slot $w={36} aria-label="AI アシスタント">
            <svg width="20" height="20" viewBox="0 0 16 16" fill="#5b4bff"><path d="M7 2.5q1 5 6.5 6-5.5 1-6.5 6-1-5-6.5-6 5.5-1 6.500-6Z" /><path d="M12.8 1q.4 2 2.200 2.500-1.800.5-2.200 2.500-.4-2-2.200-2.500Q12.400 3 12.800 1Z" fill="#3f8bff" /></svg>
          </Slot>
        </FloatBar>
      </Canvas>
      <VScroll><Thumb $v /></VScroll>
    </Stage>
    <HScroll><Thumb /></HScroll>
    <ColorBar>
      <FillPick aria-label="塗りつぶし色"><Bucket s={14} /><Caret /></FillPick>
      {palette.map(c => <Swatch key={c} $c={`#${c}`} aria-label={`#${c}`} />)}
    </ColorBar>
  </Work>
);

/* ---------- right rail ---------- */

const RightRail = styled.nav`
  flex: none;
  width: 35px;
  display: flex;
  flex-direction: column;
  align-items: stretch;
  gap: 10px;
  border-left: 1px solid ${line};
`;
const RightItem = styled.button<{ $on?: boolean; $h?: number }>`
  height: ${p => p.$h ?? 35}px;
  display: grid;
  place-items: center;
  background: ${p => (p.$on ? blue : 'transparent')};
`;
const RightChevron = styled.span`padding-top: 10px;`;

const RightArea = () => (
  <RightRail>
    <RightItem $h={22} aria-label="展開"><RightChevron><ChevronsLeft size={20} strokeWidth={2.2} color={ink} /></RightChevron></RightItem>
    <RightItem $on aria-label="スタイル"><Bucket c="#fff" s={20} /></RightItem>
    <RightItem aria-label="プロパティ"><Icon s={18} w={1.7}><path d="M1 1h10.5L15 4.5V15H1zM4 7.5h1.5M7 7.5h5.5M4 11h1.5M7 11h5.5" /></Icon></RightItem>
    <RightItem aria-label="プレゼンテーション"><Icon s={20} w={1.6}><path d="M0 2h16M2 2v9.5h12V2M5.5 11.5 4 14.5M10.5 11.5l1.5 3" /><path d="M6.5 4.5v5L10 7Z" fill={ink} stroke="none" /></Icon></RightItem>
    <RightItem aria-label="履歴"><Icon s={18} w={1.7}><path d="M2.5 4.5A6.8 6.8 0 1 1 1.3 9M2 1v4h4M8.5 4.5V9l3 1.5" /></Icon></RightItem>
    <RightItem aria-label="ヘルプ"><CircleHelp size={20} strokeWidth={2.2} color={ink} /></RightItem>
    <Spacer />
    <RightItem aria-label="設定"><Gear s={18} w={1.5} /></RightItem>
  </RightRail>
);

/* ---------- status bar ---------- */

const Status = styled.footer`
  flex: none;
  height: 32px;
  display: flex;
  align-items: center;
  padding: 0 12px 0 8px;
  background: #f2f3f9;
  white-space: nowrap;
`;
const PageSelect = styled.label`
  width: 128px;
  padding: 0 13px 0 16px;
  display: flex;
  align-items: center;
  select { flex: 1; appearance: none; border: 0; background: none; padding: 0; outline: 0; font-size: 11px; }
`;
const ZoomSelect = styled(PageSelect)`
  width: 64px;
  padding: 0 12px 0 10px;
`;
const PageTab = styled.button`
  width: 72px;
  color: ${blue};
  font-size: 11px;
  font-weight: 600;
`;
const Info = styled.span<{ $w: number }>`
  width: ${p => p.$w}px;
  text-align: center;
  font-feature-settings: normal;
`;
const Zoom = styled.input`
  width: 96px;
  height: 12px;
  margin: 0 4px;
  appearance: none;
  background: linear-gradient(90deg, ${ink} 33%, #fff 33%) center / 100% 2px no-repeat;
  &::-webkit-slider-thumb {
    appearance: none;
    width: 11px;
    height: 11px;
    border: 2px solid ${ink};
    border-radius: 50%;
    background: #fff;
  }
`;

const StatusArea = () => (
  <Status>
    <Slot $w={40} aria-label="ページ一覧"><Icon s={18} w={1.3}><path d="M4 2.5h8v11H4zM1.5 2v12M14.5 2v12" /></Icon></Slot>
    <Rule $h={24} />
    <PageSelect><select aria-label="ページ"><option>ページ-1</option></select><Caret /></PageSelect>
    <Rule $h={24} />
    <Slot $w={40} aria-label="ページを追加"><Plus size={16} strokeWidth={1.8} /></Slot>
    <Rule $h={24} />
    <PageTab>ページ-1</PageTab>
    <Rule $h={24} />
    <Spacer />
    <Rule $h={24} />
    <Info $w={95}>図形の個数：8</Info>
    <Rule $h={24} />
    <Info $w={84}>図形ID：117</Info>
    <Rule $h={24} />
    <Slot $w={50} aria-label="レイヤー"><Layers size={19} strokeWidth={1.7} color={ink} /><Caret /></Slot>
    <Slot $w={96}><Icon w={1.4}><path d="M4 1.5H1.5V4M12 1.5h2.5V4M4 14.5H1.5V12M12 14.5h2.5V12M5.5 4.5H8.500l2 2v5H5.500Z" /></Icon><Small>全画面モード</Small></Slot>
    <Slot $w={34} aria-label="再生"><Icon w={1.2}><circle cx="8" cy="8" r="7" /><path d="M6.5 5v6L10.5 8Z" /></Icon></Slot>
    <Gap $w={4} />
    <Rule $h={24} />
    <Slot $w={28} aria-label="縮小"><Minus size={14} strokeWidth={2} /></Slot>
    <Zoom type="range" min={0} max={100} defaultValue={31} aria-label="ズーム" />
    <Slot $w={24} aria-label="拡大"><Plus size={14} strokeWidth={2} /></Slot>
    <ZoomSelect><select aria-label="倍率"><option>131%</option></select><Caret /></ZoomSelect>
    <Rule $h={24} />
    <Gap $w={4} />
    <Slot $w={32} aria-label="全体表示"><Icon s={15} w={1.5}><path d="M4 1H1v3M12 1h3v3M4 15H1v-3M12 15h3v-3M5 5h6v6H5z" /></Icon></Slot>
    <Slot $w={32} aria-label="幅に合わせる"><Icon s={15} w={1.5}><path d="M1 1.5h14v13H1zM3 8h10M5 6 3 8l2 2M11 6l2 2-2 2" /></Icon></Slot>
  </Status>
);

export default function App() {
  return (
    <Shell>
      <Global />
      <TitleArea />
      <MenuArea />
      <RibbonArea />
      <Body>
        <Rail>
          <RailTop aria-label="折りたたむ"><ChevronsLeft size={20} strokeWidth={2.2} color={ink} /></RailTop>
          {railItems.map(it => (
            <RailItem key={it.name} $on={it.on}><span>{it.icon}</span>{it.name}</RailItem>
          ))}
        </Rail>
        <SymbolPanel />
        <WorkArea />
        <RightArea />
      </Body>
      <StatusArea />
    </Shell>
  );
}
